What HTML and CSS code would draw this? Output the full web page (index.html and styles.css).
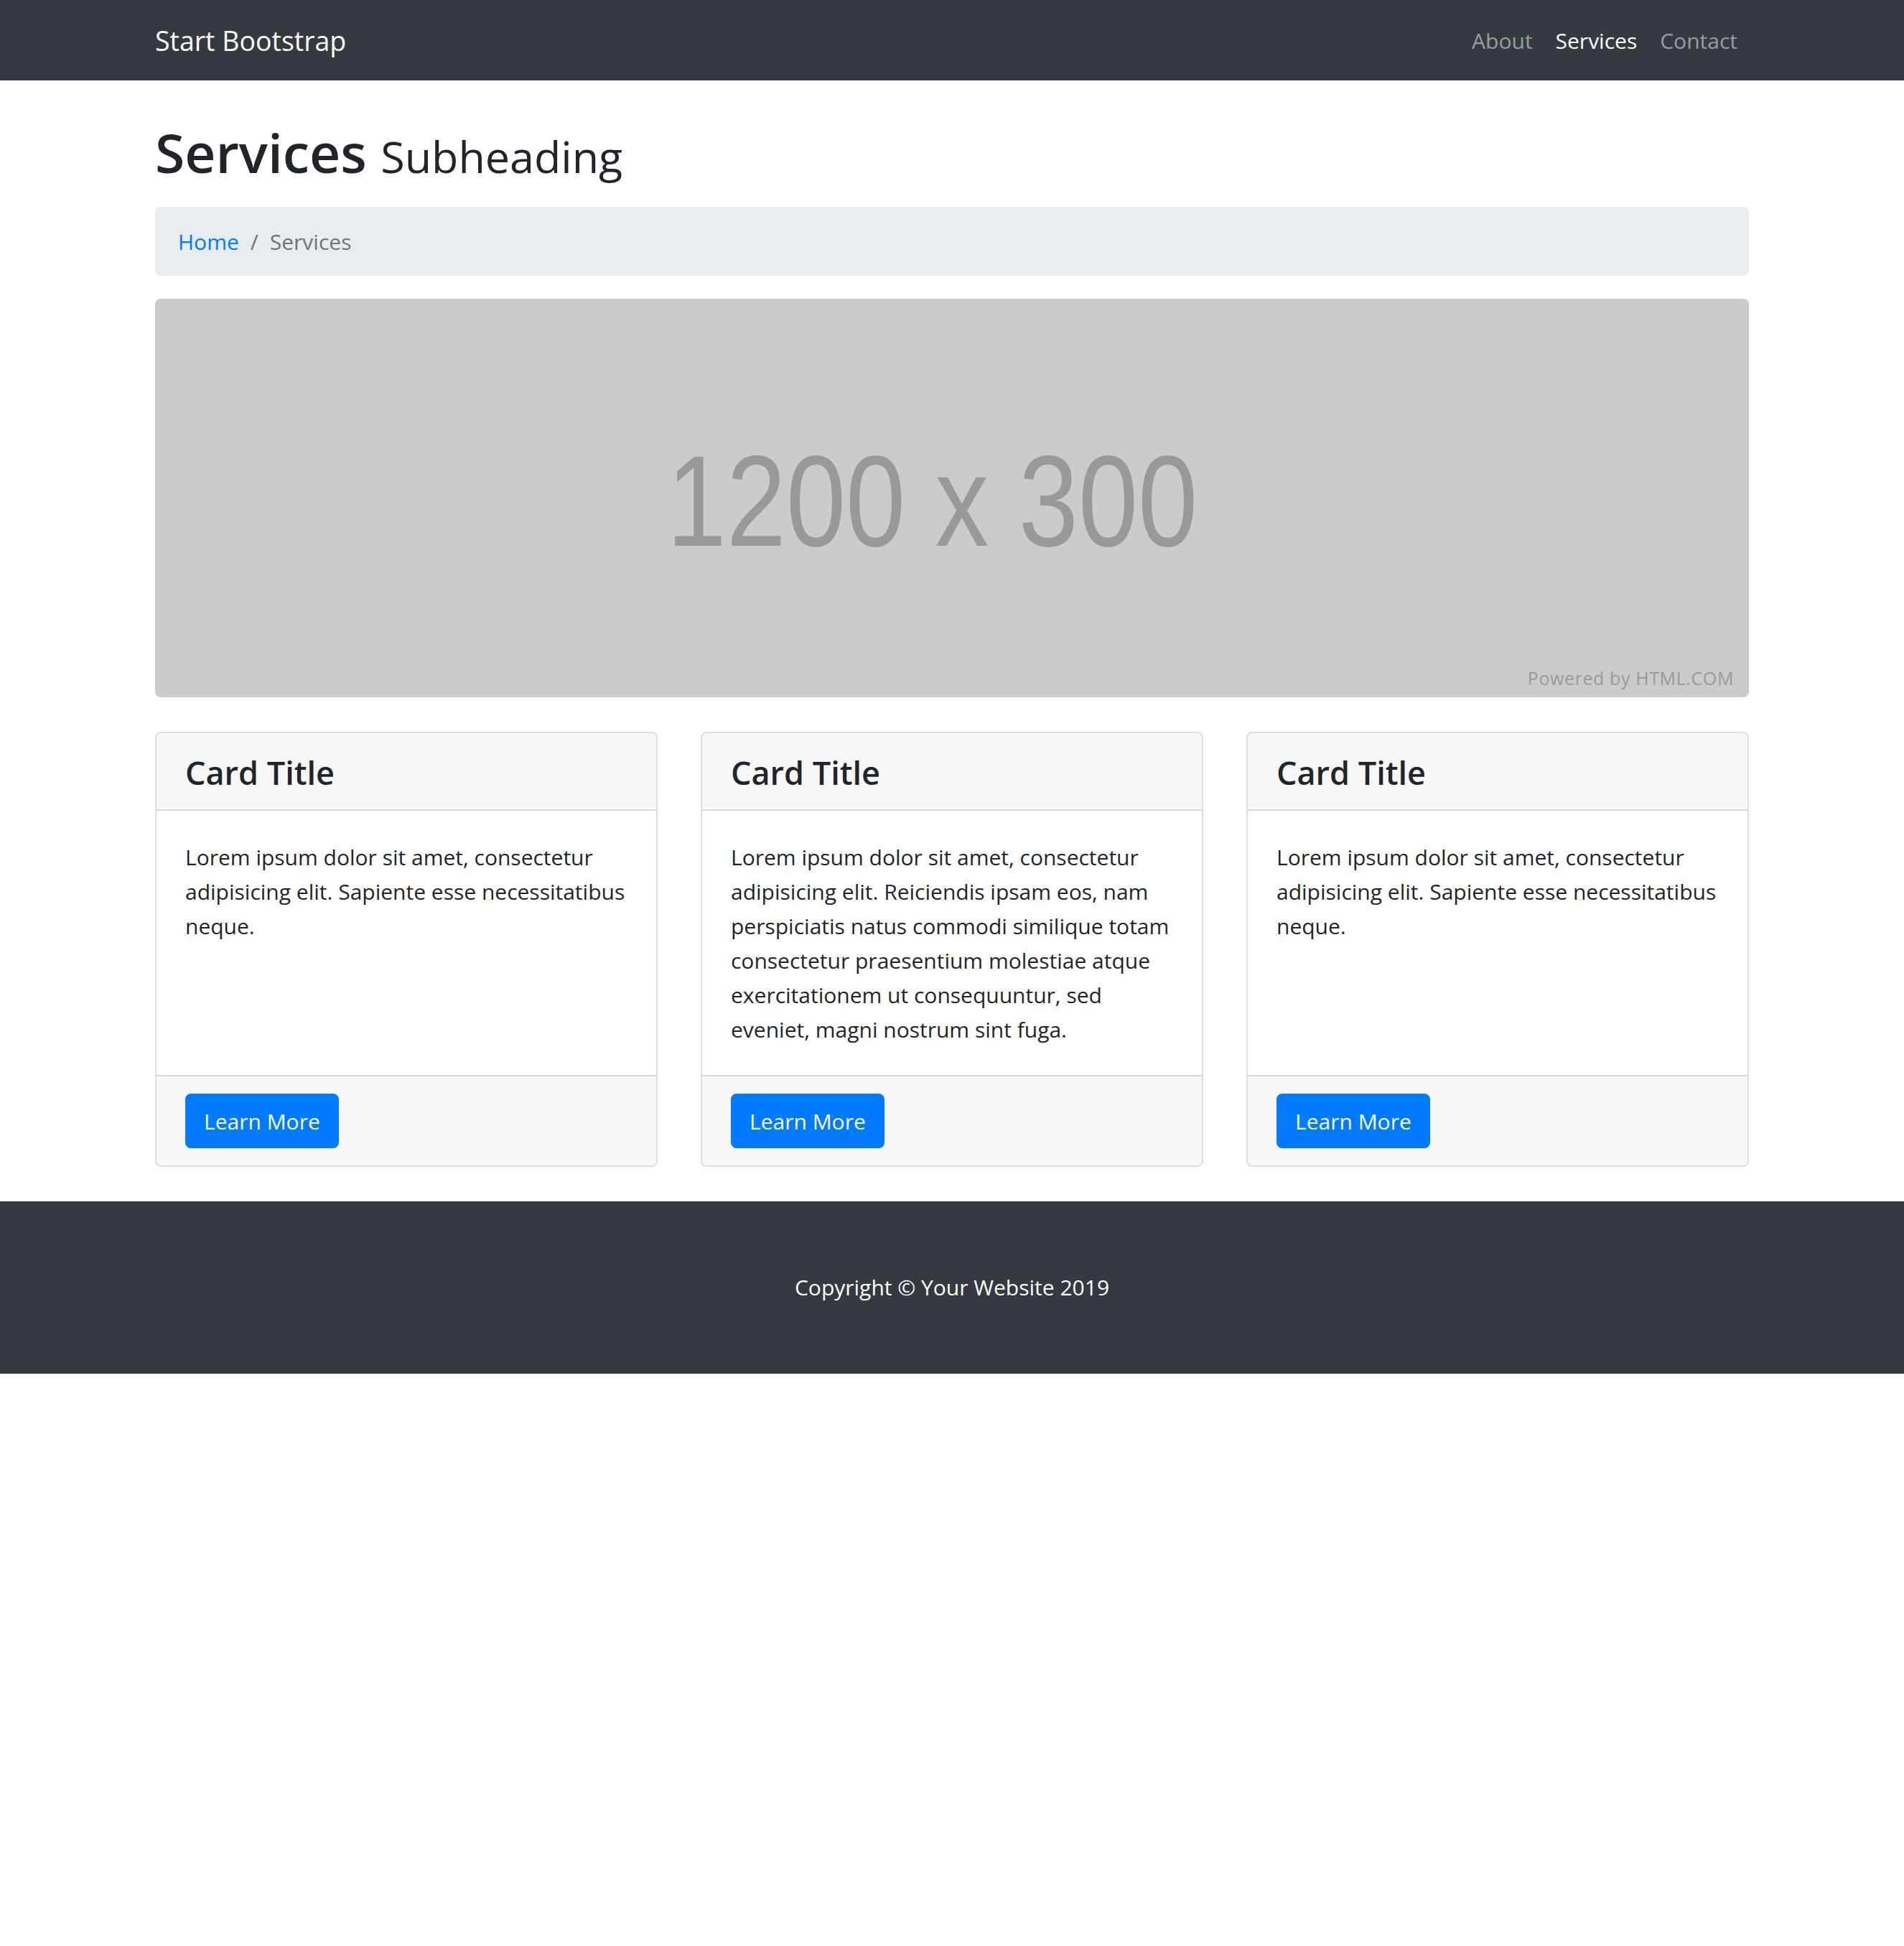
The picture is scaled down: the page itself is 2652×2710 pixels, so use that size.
FILE: index.html
```html
<!DOCTYPE html>
<html lang="en">
<head>
<meta charset="utf-8">
<title>Services - Start Bootstrap</title>
<link rel="stylesheet" href="styles.css">
</head>
<body>
<nav class="navbar">
  <div class="container nav-inner">
    <a class="brand" href="#">Start Bootstrap</a>
    <ul class="nav-links">
      <li><a class="nav-link" href="#">About</a></li>
      <li><a class="nav-link active" href="#">Services</a></li>
      <li><a class="nav-link" href="#">Contact</a></li>
    </ul>
  </div>
</nav>

<main class="container">
  <h1 class="page-title">Services <small>Subheading</small></h1>

  <ol class="breadcrumb">
    <li class="crumb"><a href="#">Home</a></li>
    <li class="crumb active">Services</li>
  </ol>

  <div class="hero-img">
    <span class="hero-size">1200 x 300</span>
    <span class="hero-credit">Powered by HTML.COM</span>
  </div>

  <div class="card-row">
    <div class="card">
      <h4 class="card-header">Card Title</h4>
      <div class="card-body">
        <p class="card-text">Lorem ipsum dolor sit amet, consectetur adipisicing elit. Sapiente esse necessitatibus neque.</p>
      </div>
      <div class="card-footer"><a href="#" class="btn">Learn More</a></div>
    </div>
    <div class="card">
      <h4 class="card-header">Card Title</h4>
      <div class="card-body">
        <p class="card-text">Lorem ipsum dolor sit amet, consectetur adipisicing elit. Reiciendis ipsam eos, nam perspiciatis natus commodi similique totam consectetur praesentium molestiae atque exercitationem ut consequuntur, sed eveniet, magni nostrum sint fuga.</p>
      </div>
      <div class="card-footer"><a href="#" class="btn">Learn More</a></div>
    </div>
    <div class="card">
      <h4 class="card-header">Card Title</h4>
      <div class="card-body">
        <p class="card-text">Lorem ipsum dolor sit amet, consectetur adipisicing elit. Sapiente esse necessitatibus neque.</p>
      </div>
      <div class="card-footer"><a href="#" class="btn">Learn More</a></div>
    </div>
  </div>
</main>

<footer class="footer">
  <div class="container">
    <p class="copyright">Copyright &copy; Your Website 2019</p>
  </div>
</footer>
</body>
</html>
```

FILE: styles.css
```css
*, *::before, *::after { box-sizing: border-box; }

html, body {
  margin: 0;
  padding: 0;
  background: #fff;
}

body {
  font-family: "Open Sans", "Noto Sans", "DejaVu Sans", sans-serif;
  font-size: 30px;
  line-height: 48px;
  color: #212529;
}

a { text-decoration: none; }

.container {
  width: 100%;
  max-width: 2280px;
  margin: 0 auto;
  padding: 0 30px;
}

/* ---------- navbar ---------- */
.navbar {
  background: #343a40;
  padding: 16px 32px;
}

.nav-inner {
  display: flex;
  align-items: center;
  justify-content: space-between;
}

.brand {
  color: #fff;
  font-size: 37.5px;
  line-height: 60px;
  padding: 11px 0 9px;
  margin-right: 32px;
}

.nav-links {
  display: flex;
  list-style: none;
  margin: 0;
  padding: 0;
}

.nav-link {
  display: block;
  padding: 17px 16px 15px;
  line-height: 48px;
  color: rgba(255, 255, 255, 0.5);
}

.nav-link.active { color: #fff; }

/* ---------- heading ---------- */
.page-title {
  margin: 52px 0 28px;
  font-size: 75px;
  font-weight: 600;
  line-height: 96px;
}

.page-title small {
  font-size: 61px;
  font-weight: 400;
  line-height: 72px;
}

/* ---------- breadcrumb ---------- */
.breadcrumb {
  display: flex;
  list-style: none;
  margin: 0 0 32px;
  padding: 25px 32px 23px;
  background: #e9ecef;
  border-radius: 8px;
}

.crumb a { color: #007bff; }

.crumb + .crumb { padding-left: 16px; }

.crumb + .crumb::before {
  content: "/";
  display: inline-block;
  padding-right: 16px;
  color: #6c757d;
}

.crumb.active { color: #6c757d; }

/* ---------- placeholder image ---------- */
.hero-img {
  position: relative;
  height: 555px;
  margin-bottom: 48px;
  background: #cbcbcb;
  border-radius: 8px;
  display: flex;
  align-items: center;
  justify-content: center;
  overflow: hidden;
}

.hero-size {
  display: inline-block;
  font-family: "Liberation Sans", Arial, sans-serif;
  font-size: 180px;
  line-height: 180px;
  color: #999;
  transform: scaleX(0.83);
  margin: 8px 56px 0 0;
  white-space: nowrap;
}

.hero-credit {
  position: absolute;
  right: 21px;
  bottom: 14px;
  font-family: "Open Sans", "Noto Sans", sans-serif;
  font-size: 25px;
  line-height: 25px;
  letter-spacing: 0.6px;
  color: #9a9a9a;
}

/* ---------- cards ---------- */
.card-row {
  display: grid;
  grid-template-columns: repeat(3, 1fr);
  column-gap: 60px;
}

.card {
  display: flex;
  flex-direction: column;
  margin-bottom: 48px;
  border: 2px solid rgba(0, 0, 0, 0.125);
  border-radius: 8px;
  background: #fff;
  overflow: hidden;
}

.card-header {
  margin: 0;
  padding: 26px 40px 22px;
  font-size: 45px;
  font-weight: 600;
  line-height: 57.6px;
  background: rgba(0, 0, 0, 0.03);
  border-bottom: 2px solid rgba(0, 0, 0, 0.125);
}

.card-body {
  flex: 1 1 auto;
  padding: 41px 40px 39px;
}

.card-text { margin: 0; }

.card-footer {
  padding: 24px 40px;
  background: rgba(0, 0, 0, 0.03);
  border-top: 2px solid rgba(0, 0, 0, 0.125);
}

.btn {
  display: inline-block;
  padding: 13px 24px 11px;
  line-height: 48px;
  color: #fff;
  background: #007bff;
  border: 2px solid #007bff;
  border-radius: 8px;
}

/* ---------- footer ---------- */
.footer {
  background: #343a40;
  padding: 96px 0;
}

.copyright {
  margin: 0;
  color: #fff;
  text-align: center;
}
```
